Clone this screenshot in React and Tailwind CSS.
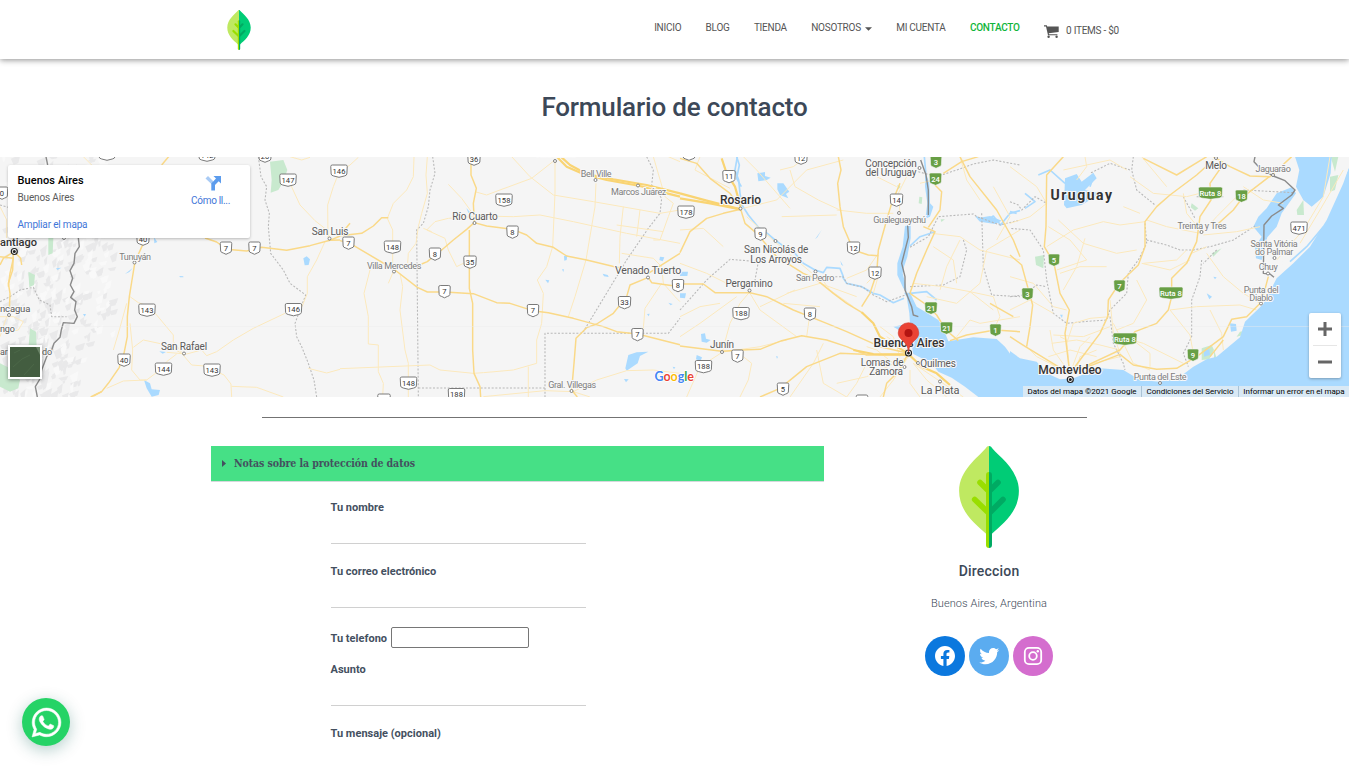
import React from "react";
import { FaWhatsapp } from "react-icons/fa";

const TILES = [
  {
    x: 0,
    green: [
      "M810,35 L850,30 862,60 850,95 835,120 812,128 815,90 Z",
      "M85,365 L105,375 102,405 88,412 Z",
      "M90,535 L108,545 110,590 85,600 Z",
      "M0,640 L30,655 60,690 55,715 30,725 0,710 Z",
      "M145,264 L160,264 158,310 145,315 Z",
    ],
    water: [
      "M910,325 L920,319 930,328 926,345 914,346 Z",
      "M462,262 L472,276 463,280 Z",
      "M432,690 L450,700 455,718 480,720 476,735 455,740 440,715 Z",
      "M375,372 L398,354 388,366 Z",
      "M538,378 L550,379 550,382 540,382 Z",
      "M478,604 L498,606 488,611 Z",
      "M249,492 L258,492 254,500 Z",
      "M168,355 L184,353 172,360 Z",
    ],
    minor: [
      "M870,100 L900,165 945,212 978,238 988,262",
      "M1020,60 L1000,110 983,165 984,262",
      "M975,275 L950,330 922,380 922,430 906,470",
      "M855,490 L760,535 700,570 650,605 620,617 605,600 560,612 500,607",
      "M390,440 L415,458 445,468 470,495 520,555 520,575 545,607",
      "M380,460 L358,540 340,600",
      "M390,520 L398,600 395,660 420,690 440,690",
      "M400,592 L430,570 500,585 545,610 575,645 612,648 672,675 693,702 695,741",
      "M530,612 L500,635 480,660 440,690 370,693 320,715",
      "M695,709 L770,712 850,741",
      "M925,655 L980,669 1020,658",
      "M250,20 L280,50",
      "M0,170 L20,210 20,264",
      "M0,500 L40,500 70,515 55,540 25,545",
      "M20,500 L0,560",
      "M870,20 L905,30 930,22",
    ],
    major: [
      "M430,280 L405,335 396,390 388,440 382,500 382,560 372,610 358,652 325,700 305,725 272,741",
      "M615,264 L650,276 680,298 740,303 785,292 860,301 930,287 990,271 1020,270",
      "M510,15 L485,45",
      "M305,725 L280,738",
      "M990,271 L1020,258",
      "M42,305 L10,325 0,345",
      "M42,305 L62,325 65,345",
      "M40,305 L38,360 25,400 30,430 28,480",
      "M0,320 L40,325 30,370 25,410",
    ],
    dotted: [
      "M775,20 L783,80 800,110 795,150 808,190 805,230 812,310 850,360 870,400 917,435 900,480 885,520 890,560 905,590 925,640 942,690 950,741",
      "M0,455 L30,440 60,420 100,412 118,450 150,465 155,500 200,500",
      "M0,165 L25,172",
    ],
    border: [
      "M138,20 L143,45 M235,264 L238,290 225,310 222,340 210,362 218,385 211,405 222,425 212,442 228,455 224,480 232,500 222,520 190,518 184,540 180,562 162,580 155,600 140,620 125,660 118,690 106,710 112,741",
    ],
  },
  {
    x: 340,
    green: [],
    water: [
      "M865,615 L890,607 925,605 900,618 893,640 860,662 856,655 Z",
      "M852,687 L866,688 858,697 Z",
      "M672,318 L682,316 680,330 673,332 Z",
      "M788,371 L803,375 806,381 792,379 Z",
      "M616,389 L628,391 624,400 Z",
      "M960,320 L973,322 968,334 958,330 Z",
      "M985,458 L998,462 992,466 Z",
      "M379,174 L393,190 385,188 Z",
      "M921,492 L929,491 926,499 Z",
      "M666,358 L672,358 670,366 Z",
      "M998,650 L1006,652 1002,658 Z",
    ],
    minor: [
      "M222,20 L220,80 200,120 160,160 142,205 158,240 158,340",
      "M262,20 L258,75 262,130 245,190 235,230 228,280 205,310 203,340",
      "M325,103 L365,145 405,200",
      "M405,125 L440,135 480,120 575,85 645,30",
      "M515,20 L570,80 640,135 760,155 960,190 1020,180",
      "M415,198 L520,200 600,195 700,215 860,250 1020,280",
      "M400,200 L325,205 285,215 260,240 315,265 325,300 350,350 390,330",
      "M250,235 L275,245",
      "M645,35 L645,130 638,290 620,350 592,390 610,430 605,520 590,570 590,640 520,660 430,668 400,670 300,660 270,645 0,656",
      "M768,100 L765,170 738,330 705,440 685,500",
      "M850,170 L840,260 838,340",
      "M900,180 L890,260",
      "M830,225 L970,245",
      "M90,360 L72,430 85,500 85,582 115,585 115,665 130,700 128,741",
      "M180,370 L188,410 180,480 195,600 205,640 205,741",
      "M565,650 L565,741 M430,740 L615,722 700,725",
      "M985,20 L1020,35 M940,20 L975,140 1000,160 985,200 960,270 940,270",
      "M845,310 L940,325 965,350 970,400 1005,440 1020,455",
      "M965,400 L915,475 910,535",
      "M700,725 L770,690 860,662 940,660 1020,670",
      "M700,725 L750,741",
      "M0,65 L30,45 55,22",
      "M160,365 L145,400",
    ],
    major: [
      "M0,257 L65,250 100,228 125,203 145,203",
      "M0,272 L30,280 165,360 232,412 262,426 315,426 400,431 470,458 510,460 578,482 625,488 700,505 790,530 830,545 893,552 1020,584",
      "M0,256 L30,220",
      "M393,20 L393,75 409,115 400,160 403,218 380,238 340,270 305,300 285,315 262,335 245,342",
      "M403,218 L440,228 518,238 560,255 590,280 640,292 680,318 740,330 830,352 925,370 1020,310",
      "M388,240 L388,415 398,460 398,600 402,670 420,710 422,741",
      "M925,382 L870,405 860,440 820,490 770,522 740,533 708,565 702,640 695,720",
      "M925,382 L935,398 1020,410",
      "M695,720 L712,741",
    ],
    highway: [
      "M645,15 L680,50 730,72 800,90 900,108 960,125 1020,140",
      "M665,22 L690,45 740,72 820,88 920,105 1020,130",
    ],
    dotted: [
      "M278,20 L285,70 270,120 265,170 250,220 230,240 235,741",
      "M235,714 L615,714 615,550 985,550 1020,505",
      "M615,714 L615,741",
      "M920,20 L940,60 935,105 965,145 960,190 925,235 860,330 730,545",
    ],
    border: [],
  },
  {
    x: 680,
    green: [
      "M718,140 L727,142 725,162 716,160 Z",
      "M652,105 L662,110 655,118 Z",
      "M782,208 L795,208 784,216 Z",
    ],
    water: [
      "M232,70 L255,66 255,78 272,83 260,90 235,94 Z",
      "M292,100 L310,100 328,125 318,132 325,145 300,135 292,118 Z",
      "M405,268 L425,240 412,262 Z M481,332 L490,348 484,344 Z",
      "M0,365 L24,365 22,378 0,378 Z M0,430 L18,430 15,445 0,443 Z",
      "M63,552 L75,550 78,566 92,570 80,578 65,575 Z",
      "M50,615 L66,622 62,633 48,628 Z",
      "M288,618 L294,620 291,626 Z",
      "M735,60 L748,100 750,160 760,170 750,200 736,206 742,160 735,110 Z",
      "M675,228 L692,226 692,265 682,320 672,350 668,370 678,410 680,425 670,415 652,375 652,340 668,290 Z",
      "M640,530 L690,520 688,490 680,440 672,428 690,428 710,470 735,485 775,510 790,535 805,574 880,562 950,567 975,590 1000,625 1020,640 1020,741 895,741 855,710 815,683 775,665 755,640 700,612 690,560 Z",
      "M890,205 L930,198 965,212 945,222 900,215 Z",
    ],
    river: [
      "M172,20 L165,60 176,90 180,130 186,165 205,195 235,232 262,250 285,270 320,295 345,310 370,340 405,360 430,368 440,352 480,355 490,380",
      "M170,20 L178,45 170,85 184,110",
      "M486,378 L500,400 545,410 580,430 600,435 640,458 672,445",
      "M733,20 L738,75",
      "M888,200 L920,212 940,198 962,225 990,190 1020,182",
      "M765,245 L720,260 690,288",
      "M690,430 L740,425 770,450",
    ],
    minor: [
      "M190,20 L230,60 330,175 M300,60 L340,50 380,20",
      "M0,240 L70,235 130,290 M60,20 L45,60 150,115",
      "M190,175 L290,150 380,60 490,30 M305,200 L470,195 M330,60 L345,110 415,150 480,180",
      "M200,200 L290,280 420,390",
      "M0,340 L80,370 140,400 M210,425 L180,460 150,520 128,600",
      "M0,500 L60,470 120,460 M128,606 L60,650 20,741",
      "M128,606 L240,590 320,570 M210,430 L240,480 350,560",
      "M180,741 L205,690 215,640 190,620 M240,470 L345,420 M310,460 L420,470",
      "M330,741 L400,640 430,580 M410,600 L430,700 500,741",
      "M420,380 L450,420 520,470 M390,490 L380,560",
      "M470,180 L560,190 640,190 M595,310 L560,360 500,385",
      "M560,400 L600,360 580,430 M600,30 L590,80 650,110",
      "M690,60 L655,130 660,190 M760,90 L720,100",
      "M755,250 L840,260 900,300 1020,330 M760,290 L820,330 830,400",
      "M840,270 L800,350 780,420 M700,400 L790,410 870,425 940,480",
      "M740,440 L830,460 900,400 920,300 1020,240",
      "M950,270 L990,200 940,110 M840,20 L860,90 900,150",
      "M850,741 L700,640 M560,640 L530,700 500,741",
      "M600,741 L640,690 685,620 M685,620 L560,680 470,700",
      "M640,640 L590,600 560,590 M660,620 L640,560 600,530 M680,600 L620,560",
      "M700,640 L740,690 800,741 M690,660 L690,700 720,741",
      "M320,430 L420,400 530,440 M170,440 L60,520 0,560",
      "M940,540 L960,500 940,440 870,425 M830,560 L870,510 900,520 1020,500",
    ],
    major: [
      "M0,308 L30,245 80,205 130,190 182,178",
      "M0,25 L50,40 90,85 150,130 175,165",
      "M475,20 L483,60 473,100 480,170 490,230 520,300 565,315 595,317",
      "M660,100 L635,160 620,210 595,300 593,330 590,370 570,430 545,470",
      "M182,178 L195,220 230,250 290,320 370,370 405,385 460,430 500,460 550,490",
      "M0,402 L70,402 105,428 210,428 260,440 340,480 440,520 500,545 600,590 685,610",
      "M0,588 L125,604 185,600 240,598 305,572 365,557 440,570 500,590 560,615 685,612",
      "M685,615 L600,615 480,610 380,650 300,715 240,741",
      "M690,430 L740,465 770,495 798,540 835,572",
      "M730,230 L765,245 740,300 710,370 690,430",
      "M840,20 L870,80 950,180 1000,270 1020,320",
      "M765,105 L785,125 780,180 745,232",
      "M810,572 L860,555 945,540 1020,545",
      "M685,610 L655,665 620,700 610,741",
      "M895,20 L845,35 790,70",
      "M930,460 L1000,500",
    ],
    highway: [
      "M0,130 L80,152 182,178",
      "M0,145 L90,160 182,178",
      "M125,25 L140,70 165,110 182,170",
      "M545,487 L580,520 600,560 650,590 685,610",
      "M685,612 L725,650 770,670 810,705",
      "M520,600 L580,612 685,614",
    ],
    dotted: [
      "M0,480 L80,390 150,328 235,335 225,390 240,400",
      "M455,380 L490,380 500,400 550,412 580,435 620,455 690,430",
      "M715,65 L770,80 830,60 880,42 940,30 1020,45",
      "M690,292 L745,260 775,200 880,192 890,200 960,225 1020,210",
      "M690,410 L790,405 840,380 860,300 850,270",
      "M905,190 L910,350 935,435 1020,440",
    ],
    border: [
      "M722,30 L738,75 745,120 745,195 M683,226 L685,262 665,340 675,380 675,420 695,470 700,495 715,500",
    ],
  },
  {
    x: 1010,
    green: [
      "M75,320 L102,315 100,355 78,345 Z",
      "M545,160 L565,175 555,182 542,172 Z",
      "M860,180 L880,150 882,195 862,195 Z",
      "M960,80 L985,75 975,120 960,125 Z",
      "M605,310 L635,295 610,320 Z",
      "M575,595 L605,585 612,600 598,628 575,630 Z",
      "M612,600 L620,625 612,625 Z",
      "M690,545 L704,542 700,555 680,560 Z",
      "M962,20 L985,20 975,65 Z",
    ],
    water: [
      "M0,603 L30,625 80,635 110,670 150,688 190,685 270,655 340,660 390,690 450,695 510,680 550,650 590,628 620,620 690,562 705,515 760,462 800,385 850,340 900,290 950,210 1000,100 1017,50 1017,741 0,741 Z",
      "M855,20 L965,20 962,70 940,140 905,170 880,150 858,110 868,60 Z",
      "M770,175 L800,130 845,112 858,130 815,190 800,230 772,262 755,330 738,325 735,290 755,260 730,230 745,200 Z",
      "M165,85 L200,72 215,95 250,68 260,85 225,120 270,130 240,150 215,165 170,175 162,165 Z",
      "M660,520 L678,522 680,542 663,545 Z",
      "M582,600 L598,598 600,615 582,620 Z",
      "M590,430 L606,440 598,448 Z M610,380 L620,382 615,388 Z",
      "M150,494 L158,494 156,504 Z",
    ],
    river: [
      "M165,100 L120,60 85,75 M190,160 L160,130 M45,130 L75,155 45,175 M250,80 L240,110",
      "M0,185 L20,190",
      "M940,230 L890,290 840,335",
    ],
    minor: [
      "M0,50 L80,110 110,160 M110,290 L190,240 280,215 330,225 405,215",
      "M110,160 L60,200 0,220 M115,230 L180,270 230,330 140,360",
      "M145,210 L220,280 320,310 380,300 M340,170 L390,190",
      "M160,60 L300,30 350,60 M200,90 L230,50 225,20",
      "M225,265 L200,350 160,420 M0,380 L70,400 130,470 170,480",
      "M150,370 L210,350 290,350 M300,500 L240,505 190,520 170,580",
      "M395,340 L480,360 540,330 M400,340 L500,330 530,300",
      "M380,390 L410,450 370,520 320,540",
      "M410,210 L470,230 570,250 M520,130 L530,190 575,245",
      "M575,250 L620,200 690,130 M580,255 L680,245 750,230",
      "M590,310 L640,380 700,430 750,460 M545,310 L590,290",
      "M480,480 L560,470 690,465 740,480 M480,480 L540,555 550,610",
      "M600,480 L635,550 640,600 M300,450 L310,550 330,610",
      "M310,520 L370,640 420,660 M330,560 L400,580 520,640",
      "M180,670 L130,600 120,540 M180,670 L170,570 150,560 M180,670 L210,590 240,560",
      "M180,670 L250,640 330,620 M180,670 L280,660 M125,580 L200,570 270,585 330,600",
      "M115,620 L180,600 260,620 M130,555 L220,560 300,530",
      "M180,670 L80,620 50,590 M150,660 L120,640 M200,655 L210,620 260,600",
      "M375,575 L420,610 420,650 M0,480 L60,450 130,490",
      "M395,20 L470,110 M360,80 L430,130 530,140 610,120",
      "M960,20 L940,140 880,240 800,330 M1000,60 L930,180 870,280",
      "M700,110 L760,150 820,160",
    ],
    major: [
      "M160,20 L110,75 108,230 103,290 132,340 150,430 178,480 165,550 178,660",
      "M0,315 L35,345 50,400 68,465 60,530 50,590",
      "M0,560 L50,592 120,635 178,670",
      "M180,670 L210,630 270,550 293,500 295,450 328,400 385,345 405,290 405,215 440,170 480,135 560,75 610,30",
      "M400,25 L500,75 590,20",
      "M635,50 L600,100 603,150 570,200 560,275 530,340 485,385 485,440 475,480 440,520 375,545 330,600 180,670",
      "M778,80 L700,140 670,180 620,225",
      "M610,20 L660,50 720,78 780,80 845,20",
      "M180,670 L260,640 330,613 370,645 440,658 500,655 560,620 640,560 665,508 710,500 755,455 775,380",
      "M600,620 L640,570",
    ],
    dotted: [
      "M0,155 L25,165 35,180 75,140 110,160",
      "M370,20 L365,60 380,120 435,165",
      "M360,60 L300,40 240,70",
      "M520,140 L555,205 M410,270 L470,285 510,300 550,300 600,290 670,270 735,228",
      "M405,220 L410,280 385,330 355,370 350,430 300,480 290,510 220,515 170,520 130,490 110,390 100,300 60,240 0,235",
      "M0,440 L40,435 80,405 110,410",
      "M575,330 L570,380 545,450 545,560 520,610 535,650",
      "M300,500 L310,580 340,640 345,660",
      "M560,140 L640,140 M700,120 L850,128 M620,300 L580,340",
    ],
    border: [
      "M735,20 L732,35 755,60 790,78 825,92 855,120 845,135 805,165 820,175 785,198 762,225 760,370 780,372 792,382",
    ],
  },
];

/* [text, x, y, size, tone, anchor] */
const LABELS = [
  ["antiago", 0, 246, 11, "city", "start"],
  ["Tunuyán", 135, 260, 9, "town"],
  ["ncagua", 0, 312, 9.5, "mid", "start"],
  ["ngo", 0, 332, 9, "mid", "start"],
  ["ar", 0, 355, 9, "mid", "start"],
  ["do", 42, 355, 9, "mid", "start"],
  ["San Rafael", 184, 350, 10, "mid"],
  ["San Luis", 330, 235, 10, "mid"],
  ["Río Cuarto", 475, 220, 10, "mid"],
  ["Villa Mercedes", 394, 269, 9, "town"],
  ["Villa María", 555, 157, 9, "mid"],
  ["Bell Ville", 596, 177, 9, "town"],
  ["Marcos Juárez", 638.5, 195, 9, "town"],
  ["Venado Tuerto", 648, 274, 10.5, "mid"],
  ["Gral. Villegas", 572, 388, 9, "town"],
  ["Rosario", 740.5, 204, 12, "city"],
  ["San Nicolás de", 776, 253, 10, "mid"],
  ["Los Arroyos", 776, 262.5, 10, "mid"],
  ["San Pedro", 815, 281, 9, "town"],
  ["Pergamino", 749, 286.5, 10, "mid"],
  ["Junín", 722, 348, 10, "mid"],
  ["Concepción", 891, 166.5, 10, "mid"],
  ["del Uruguay", 891, 176, 10, "mid"],
  ["Gualeguaychú", 899.5, 223, 9, "town"],
  ["Buenos Aires", 909, 347, 12, "city"],
  ["Lomas de", 882, 366, 10, "mid"],
  ["Zamora", 886, 375, 10, "mid"],
  ["Quilmes", 938, 367, 10, "mid"],
  ["La Plata", 940, 394, 11, "mid"],
  ["Uruguay", 1082, 200, 14, "country"],
  ["Melo", 1216, 168.5, 10, "mid"],
  ["Jaguarão", 1273, 171.5, 9, "town"],
  ["Treinta y Tres", 1202, 229, 9, "town"],
  ["Santa Vitória", 1274, 247, 9, "town"],
  ["do Palmar", 1274, 255, 9, "town"],
  ["Chuy", 1268, 270, 9, "town"],
  ["Punta del", 1261, 292.5, 9, "town"],
  ["Diablo", 1261, 300.5, 9, "town"],
  ["Montevideo", 1070, 374, 12, "city"],
  ["Punta del Este", 1160, 380, 9, "town"],
];

const LABEL_STYLE = {
  city: { fill: "#333", fontWeight: 500 },
  mid: { fill: "#5a5a5a", fontWeight: 400, letterSpacing: -0.15 },
  town: { fill: "#7d7d7d", fontWeight: 400, letterSpacing: -0.35 },
  country: { fill: "#333", fontWeight: 700, letterSpacing: 1.5 },
};

const DOTS = [
  [134.5, 262.5], [9, 315], [184, 353.5], [329.5, 238.5], [474.5, 223], [394, 271.5], [555, 161],
  [595.5, 180], [638, 185.5], [648, 277.5], [571.5, 391], [740.5, 208.5], [775.5, 241], [815.5, 271.5],
  [749.5, 290.5], [722, 352], [919.5, 168], [899, 213], [904.5, 367], [918, 363], [940, 381.5],
  [1273, 175], [1201.5, 232], [1274.5, 258], [1268, 273.5], [1261, 303.5], [1160, 383], [1216, 158], [64, 238],
];

const SHIELDS = [
  ["0", 2, 193], ["147", 288, 180], ["146", 339, 171], ["7", 226, 248], ["7", 254.5, 248], ["40", 143, 239],
  ["143", 147, 310], ["146", 293.5, 309.5], ["40", 124, 360], ["144", 163.5, 369], ["143", 212, 370],
  ["7", 348.5, 243], ["148", 392.5, 247], ["8", 435, 254], ["35", 470, 262], ["8", 512.5, 232], ["158", 504, 200],
  ["36", 474, 159], ["7", 444.5, 291.5], ["7", 533, 310.5], ["148", 408.5, 383], ["188", 456.5, 394.5],
  ["33", 624.5, 302.5], ["7", 637.5, 334.5], ["178", 686, 212], ["8", 678, 285.5], ["11", 729, 176.5],
  ["9", 760.5, 234], ["12", 853.5, 248], ["12", 875, 273], ["14", 896.5, 200], ["188", 741, 313.5], ["8", 810, 314],
  ["7", 737.5, 356], ["188", 703.5, 366.5], ["5", 783, 389], ["12", 801, 158], ["3", 862, 401], ["153", 107, 154],
  ["142", 207, 155], ["20", 265, 156], ["10", 384, 400], ["471", 1299, 228], ["11", 689, 154],
];

const GREEN_SHIELDS = [
  ["3", 936, 162], ["24", 935.5, 179], ["21", 931, 308], ["21", 946.5, 328], ["1", 995.5, 330],
  ["5", 1054, 260], ["3", 1027.5, 294], ["7", 1119.5, 286], ["18", 1241.5, 196], ["9", 1193, 355],
  ["Ruta 8", 1210.5, 193], ["Ruta 8", 1171, 293], ["Ruta 8", 1125, 339],
];

/* Facets that suggest the relief of the mountain range on the western side. */
function reliefFacets() {
  let seed = 11;
  const rnd = () => {
    seed = (seed * 16807) % 2147483647;
    return seed / 2147483647;
  };
  return Array.from({ length: 420 }, (_, i) => {
    const y = 157 + rnd() * 240;
    const x = rnd() * (y > 345 ? 80 : 112);
    const w = 3 + rnd() * 7;
    const h = 1.5 + rnd() * 4;
    return {
      d: `M${x},${y} l${w},${-h} l${-w * 0.2},${h * 2} l${-w * 0.5},${h * 0.4} z`,
      fill: i % 3 === 0 ? "#f9f9f9" : "#e9e9ea",
    };
  });
}
const RELIEF = reliefFacets();

function Shield({ text, x, y, green }) {
  const w = text.length > 3 ? 24 : text.length === 3 ? 16.5 : text.length === 2 ? 12.5 : 11.5;
  const l = x - w / 2;
  const t = y - 6;
  const d = `M${l + 1.5},${t} H${l + w - 1.5} Q${l + w},${t} ${l + w},${t + 1.5} L${l + w - 0.4},${t + 9} Q${l + w - 0.6},${t + 10.5} ${l + w - 3},${t + 11} L${x},${t + 12.3} L${l + 3},${t + 11} Q${l + 0.6},${t + 10.5} ${l + 0.4},${t + 9} L${l},${t + 1.5} Q${l},${t} ${l + 1.5},${t} Z`;
  return (
    <g>
      <path d={d} fill={green ? "#689f45" : "#fff"} stroke={green ? "#f5f5f5" : "#7a7a7a"} strokeWidth={green ? 0.6 : 1} />
      <text x={x} y={y + 2.7} fontSize="7.6" fontWeight={green ? 500 : 400} textAnchor="middle" fill={green ? "#fff" : "#333"}>
        {text}
      </text>
    </g>
  );
}

function Capital({ x, y }) {
  return (
    <g>
      <circle cx={x} cy={y} r="3" fill="#fff" stroke="#222" strokeWidth="1.2" />
      <circle cx={x} cy={y} r="1.5" fill="#222" />
    </g>
  );
}

function MapCanvas() {
  const line = (paths, stroke, strokeWidth, extra = {}) =>
    (paths || []).map((d, i) => (
      <path key={i} d={d} fill="none" stroke={stroke} strokeWidth={strokeWidth} strokeLinejoin="round" {...extra} />
    ));
  const place = (t) => `translate(${t.x} 150) scale(0.33333)`;
  return (
    <svg className="block h-[240px] w-[1349px]" viewBox="0 157 1349 240" fontFamily="Roboto, sans-serif">
      <rect x="0" y="157" width="1349" height="240" fill="#f5f5f5" />
      {RELIEF.map((f, i) => (
        <path key={i} d={f.d} fill={f.fill} />
      ))}
      {TILES.map((t) => (
        <g key={t.x} transform={place(t)}>
          {t.green.map((d, i) => (
            <path key={i} d={d} fill="#c8e9ce" />
          ))}
          {t.water.map((d, i) => (
            <path key={i} d={d} fill="#aadaff" />
          ))}
          {line(t.river, "#aadaff", 5)}
        </g>
      ))}
      <path d="M1349,165 L1340,186 1326,212 1312,231 1293,252 1276,270" fill="none" stroke="#f5f5f5" strokeWidth="2" />
      {TILES.map((t) => (
        <g key={t.x} transform={place(t)}>
          {line(t.dotted, "#b8b8b8", 3.2, { strokeDasharray: "6 5" })}
          {line(t.minor, "#fce9bd", 3)}
          {line(t.major, "#fad988", 4.4)}
          {line(t.highway, "#f9d473", 6.5)}
          {line(t.border, "#8b8b8b", 4.2)}
        </g>
      ))}
      <path d="M0,326.5 H1349" stroke="#ededed" strokeWidth="0.6" opacity="0.7" />
      {DOTS.map(([x, y]) => (
        <circle key={`${x}-${y}`} cx={x} cy={y} r="1.5" fill="#fff" stroke="#777" strokeWidth="0.9" />
      ))}
      <Capital x={14.3} y={251.5} />
      <Capital x={1070.3} y={379.5} />
      {SHIELDS.map(([text, x, y], i) => (
        <Shield key={i} text={text} x={x} y={y} />
      ))}
      {GREEN_SHIELDS.map(([text, x, y], i) => (
        <Shield key={i} text={text} x={x} y={y} green />
      ))}
      {LABELS.map(([text, x, y, size, tone, anchor]) => (
        <text
          key={text + x}
          x={x}
          y={y}
          fontSize={size}
          textAnchor={anchor || "middle"}
          stroke="#f8f8f8"
          strokeWidth="2"
          paintOrder="stroke"
          {...LABEL_STYLE[tone]}
        >
          {text}
        </text>
      ))}
      <Capital x={908.5} y={353} />
      <path
        d="M908.5,352 C907.8,345.5 905.5,343.5 902.5,340.5 C899.8,338 898.2,336 898.2,333 A10.3,10.3 0 0 1 918.8,333 C918.8,336 917.2,338 914.5,340.5 C911.5,343.5 909.2,345.5 908.5,352 Z"
        fill="#ea4335"
        stroke="#d23a2d"
        strokeWidth="0.6"
      />
      <circle cx="908.5" cy="333" r="4" fill="#b31412" />
      <text x="654.5" y="381" fontSize="12.5" fontWeight="700" textLength="39.5" stroke="#fff" strokeWidth="1.5" paintOrder="stroke" fontFamily="Lato, sans-serif">
        <tspan fill="#4285f4">G</tspan>
        <tspan fill="#ea4335">o</tspan>
        <tspan fill="#fbbc05">o</tspan>
        <tspan fill="#4285f4">g</tspan>
        <tspan fill="#34a853">l</tspan>
        <tspan fill="#ea4335">e</tspan>
      </text>
    </svg>
  );
}

function Leaf({ className }) {
  return (
    <svg className={className} viewBox="177 47 180 307">
      <path d="M267,47 C262,47 259,51 256,55 C235,80 177,120 177,182 C177,245 225,280 259,312 H267 Z" fill="#bfe961" />
      <path d="M267,47 C272,47 275,51 278,55 C300,80 357,120 357,182 C357,245 309,280 275,312 H267 Z" fill="#00cc76" />
      <g fill="none" strokeWidth="17" strokeLinecap="round">
        <path d="M240,157 L262,179 M224,208 L262,245" stroke="#99de00" />
        <path d="M294,157 L272,179 M309,208 L272,245" stroke="#00aa63" />
      </g>
      <path d="M267,125 A9,9 0 0 0 258,134 V345 A9,9 0 0 0 267,354 Z" fill="#99de00" />
      <path d="M267,125 A9,9 0 0 1 276,134 V345 A9,9 0 0 1 267,354 Z" fill="#00aa63" />
    </svg>
  );
}

function Header() {
  return (
    <header className="relative z-10 flex h-[59px] shrink-0 justify-between bg-white pr-[230px] pl-[227px] shadow-[0_1px_6px_rgba(0,0,0,0.45)]">
      <Leaf className="mt-[10px] h-10 w-6" />
      <nav className="mt-[18px] flex h-5 items-center gap-[24.3px] text-[10px] leading-5 tracking-[-0.25px] whitespace-nowrap text-[#555]">
        <a>INICIO</a>
        <a>BLOG</a>
        <a>TIENDA</a>
        <a className="flex items-center gap-1">
          NOSOTROS
          <svg className="mt-0.5 h-[4px] w-[7px]" viewBox="0 0 8 4">
            <path d="M0,0 H8 L4,4 Z" fill="#555" />
          </svg>
        </a>
        <a>MI CUENTA</a>
        <a className="font-medium text-[#0fb53a]">CONTACTO</a>
        <a className="mt-[6px] flex items-center gap-[7px]">
          <svg className="h-[13px] w-[15px]" viewBox="0 0 15 13" fill="#555">
            <path d="M0,0.3 H2.8 L3.2,1.6 H14.7 V7 L4.8,8.2 L5,9.2 H13.4 V10.3 H4 L2,1.4 H0 Z" />
            <circle cx="4.6" cy="11.7" r="1.2" />
            <circle cx="12.6" cy="11.7" r="1.2" />
          </svg>
          0 ITEMS - $0
        </a>
      </nav>
    </header>
  );
}

function MapSection() {
  return (
    <section className="relative mt-8 h-[240px] shrink-0 overflow-hidden">
      <MapCanvas />
      <div className="absolute top-2 left-2 flex h-[73px] w-[242px] justify-between rounded-[2px] bg-white shadow-[0_1px_3px_rgba(0,0,0,0.25)]">
        <div className="flex flex-col pl-[9.5px]">
          <span className="mt-[9px] text-[11px] leading-[14px] font-medium tracking-[0.1px] text-black">Buenos Aires</span>
          <span className="mt-[3px] text-[10px] leading-[14px] tracking-[-0.15px] text-[#5b5b5b]">Buenos Aires</span>
          <span className="mt-[13px] text-[10px] leading-[14px] tracking-[-0.18px] text-[#3f76d8]">Ampliar el mapa</span>
        </div>
        <div className="mr-[20px] flex flex-col items-center">
          <svg className="mt-[10px] ml-[6px] h-4 w-[17px]" viewBox="0 0 17 16">
            <path d="M0.5,3.5 L3,1 L8,6 V10.5 Z" fill="#a9cbf5" />
            <path d="M8.5,1 H16 V8.5 L13.7,6.2 L10,10 V15.5 H6.3 V8.4 L11,3.6 Z" fill="#5c9ced" />
          </svg>
          <span className="mt-[2.5px] text-[10px] leading-[14px] tracking-[-0.3px] text-[#3f76d8]">Cómo ll...</span>
        </div>
      </div>
      <div className="absolute top-[188px] left-2 h-[34px] w-[34px] border-2 border-white bg-[#435d40] shadow-[0_1px_4px_rgba(0,0,0,0.4)]">
        <svg className="h-full w-full" viewBox="0 0 30 30" fill="none">
          <path d="M26,0 L30,8 V0 Z" fill="#6b8467" />
          <path d="M3,20 L12,12 20,8 M14,28 L24,17 M4,6 L10,3" stroke="#4c6848" />
        </svg>
      </div>
      <div className="absolute top-[156px] right-2 flex h-[65px] w-8 flex-col items-center rounded-[2px] bg-white shadow-[0_1px_3px_rgba(0,0,0,0.3)]">
        <svg className="h-8 w-8" viewBox="0 0 32 32">
          <path d="M9,16 H23 M16,9 V23" stroke="#666" strokeWidth="3" />
        </svg>
        <div className="h-px w-6 bg-[#e6e6e6]" />
        <svg className="h-8 w-8" viewBox="0 0 32 32">
          <path d="M9,16 H23" stroke="#666" strokeWidth="3" />
        </svg>
      </div>
      <div className="absolute right-0 bottom-0 flex h-[11px] items-center divide-x divide-[#aac3d6] bg-[#d9e9f5] text-[8px] leading-[11px] whitespace-nowrap text-black">
        <span className="w-[119px] text-center">Datos del mapa ©2021 Google</span>
        <span className="w-[97px] text-center">Condiciones del Servicio</span>
        <span className="w-[110px] text-center">Informar un error en el mapa</span>
      </div>
    </section>
  );
}

function Field({ label }) {
  return (
    <label className="flex flex-col">
      <span className="h-4">{label}</span>
      <input className="h-7 w-[255px] border-b border-[#d0d0d0] outline-none" />
    </label>
  );
}

function ContactForm() {
  return (
    <div className="flex w-[613px] flex-col">
      <button className="flex h-9 items-center border-b border-[#d5d8dc] bg-[#46e086] pl-[11px] text-left">
        <svg className="h-[7px] w-1" viewBox="0 0 4 7">
          <path d="M0,0 L4,3.5 L0,7 Z" fill="#44505f" />
        </svg>
        <span className="mt-px ml-2 font-['DejaVu_Serif_Condensed','DejaVu_Serif',serif] text-[10.5px] font-bold tracking-[-0.09px] text-[#44505f]">
          Notas sobre la protección de datos
        </span>
      </button>
      <form className="ml-[119.5px] flex w-[255px] flex-col pt-[18px] text-[11px] leading-4 font-bold tracking-[0.02px] text-[#44505f]">
        <Field label="Tu nombre" />
        <div className="h-5" />
        <Field label="Tu correo electrónico" />
        <label className="mt-[19px] flex h-[21px] items-center gap-[3.5px]">
          <span className="pt-0.5">Tu telefono</span>
          <input className="h-[21px] w-[138px] rounded-[2px] border border-[#767676]" />
        </label>
        <div className="h-[14px]" />
        <Field label="Asunto" />
        <span className="mt-5">Tu mensaje (opcional)</span>
      </form>
    </div>
  );
}

function ContactAside() {
  return (
    <aside className="flex w-[128px] flex-col items-center text-[#3c4858]">
      <Leaf className="h-[102px] w-[60px]" />
      <h2 className="mt-[13px] text-[14px] leading-5 font-medium tracking-[0.2px]">Direccion</h2>
      <p className="mt-[15px] text-[11px] leading-4 font-light tracking-[0.08px] whitespace-nowrap">Buenos Aires, Argentina</p>
      <div className="mt-[24px] flex gap-1">
        <a className="flex size-10 items-center justify-center rounded-full bg-[#0b78de]">
          <svg className="size-6" viewBox="0 0 24 24" fill="#fff">
            <path d="M12 2C6.5 2 2 6.5 2 12c0 5 3.7 9.1 8.4 9.9v-7H7.9V12h2.5V9.8c0-2.5 1.5-3.9 3.8-3.9 1.1 0 2.2.2 2.2.2v2.5h-1.3c-1.2 0-1.6.8-1.6 1.6V12h2.8l-.4 2.9h-2.3v7C18.3 21.1 22 17 22 12c0-5.5-4.5-10-10-10z" />
          </svg>
        </a>
        <a className="flex size-10 items-center justify-center rounded-full bg-[#5bacf0]">
          <svg className="size-6" viewBox="0 0 24 24" fill="#fff">
            <path d="M22.23,5.924c-0.736,0.326-1.527,0.547-2.357,0.646c0.847-0.508,1.498-1.312,1.804-2.27 c-0.793,0.47-1.671,0.812-2.606,0.996C18.324,4.498,17.257,4,16.077,4c-2.266,0-4.103,1.837-4.103,4.103 c0,0.322,0.036,0.635,0.106,0.935C8.67,8.867,5.647,7.234,3.623,4.751C3.27,5.357,3.067,6.062,3.067,6.814 c0,1.424,0.724,2.679,1.825,3.415c-0.673-0.021-1.305-0.206-1.859-0.513c0,0.017,0,0.034,0,0.052c0,1.988,1.414,3.647,3.292,4.023 c-0.344,0.094-0.707,0.144-1.081,0.144c-0.264,0-0.521-0.026-0.772-0.074c0.522,1.63,2.038,2.816,3.833,2.85 c-1.404,1.1-3.174,1.756-5.096,1.756c-0.331,0-0.658-0.019-0.979-0.057c1.816,1.164,3.973,1.843,6.29,1.843 c7.547,0,11.675-6.252,11.675-11.675c0-0.178-0.004-0.355-0.012-0.531C20.985,7.47,21.68,6.747,22.23,5.924z" />
          </svg>
        </a>
        <a className="flex size-10 items-center justify-center rounded-full bg-[#d46dce]">
          <svg className="size-6" viewBox="0 0 24 24" fill="none" stroke="#fff" strokeWidth="1.8">
            <rect x="3.8" y="3.8" width="16.4" height="16.4" rx="4.2" />
            <circle cx="12" cy="12" r="3.8" />
            <circle cx="16.8" cy="7.2" r="1.2" fill="#fff" stroke="none" />
          </svg>
        </a>
      </div>
    </aside>
  );
}

export default function App() {
  return (
    <div className="flex h-[768px] w-[1349px] flex-col overflow-hidden bg-white font-['Roboto',sans-serif]">
      <Header />
      <h1 className="mt-[30px] text-center text-[26px] leading-9 font-medium tracking-[-0.17px] text-[#3c4858]">Formulario de contacto</h1>
      <MapSection />
      <hr className="mt-5 ml-[262px] w-[825px] shrink-0 border-t border-[#737373]" />
      <main className="mt-[28px] flex gap-[101px] pl-[211px]">
        <ContactForm />
        <ContactAside />
      </main>
      <a className="fixed top-[698px] left-[22px] flex size-12 items-center justify-center rounded-full bg-[#25d366] shadow-[0_4px_16px_rgba(7,94,84,0.3)]">
        <FaWhatsapp className="size-[33px] stroke-white stroke-8 text-white" />
      </a>
    </div>
  );
}
